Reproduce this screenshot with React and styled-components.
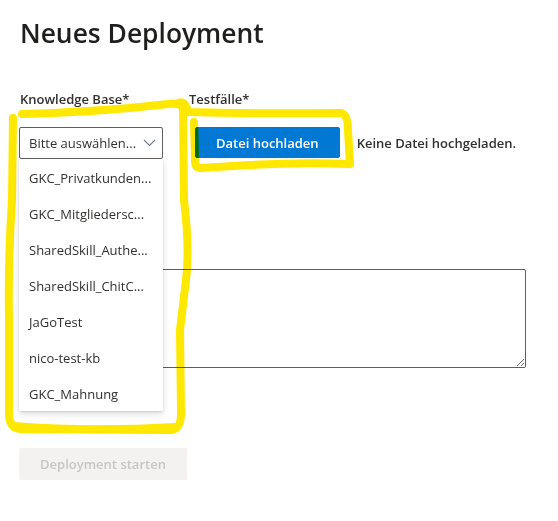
import styled, { createGlobalStyle } from "styled-components";

const GlobalStyle = createGlobalStyle`
  body {
    margin: 0;
    background: #ffffff;
    font-family: "Open Sans", "Noto Sans", sans-serif;
    color: #323130;
  }
`;

const options = [
  "GKC_Privatkunden...",
  "GKC_Mitgliedersc...",
  "SharedSkill_Authe...",
  "SharedSkill_ChitC...",
  "JaGoTest",
  "nico-test-kb",
  "GKC_Mahnung",
];

export default function App() {
  return (
    <>
      <GlobalStyle />
      <Page>
        <Title>Neues Deployment</Title>

        <FieldRow>
          <Field $width={169}>
            <Label>Knowledge Base*</Label>
            <DropdownWrap>
              <Dropdown>
                <span>Bitte auswählen...</span>
                <svg width="13" height="8" viewBox="0 0 13 8" fill="none">
                  <path d="M1 1l5.5 5.5L12 1" stroke="#6f7c8e" strokeWidth="1.1" />
                </svg>
              </Dropdown>
              <Callout>
                {options.map((o) => (
                  <Option key={o}>{o}</Option>
                ))}
              </Callout>
            </DropdownWrap>
          </Field>

          <Field>
            <Label>Testfälle*</Label>
            <UploadRow>
              <PrimaryButton type="button">Datei hochladen</PrimaryButton>
              <FileHint>Keine Datei hochgeladen.</FileHint>
            </UploadRow>
          </Field>
        </FieldRow>

        <TextArea />

        <DisabledButton type="button" disabled>
          Deployment starten
        </DisabledButton>

        <Marker width="558" height="521" viewBox="0 0 558 521">
          {/* highlight around the dropdown */}
          <path
            d="M22 114 Q100 112 168 104 Q180 102 183 108 L184 200 Q190 250 186 280 L180 330 L181 410 Q182 430 170 430 L20 429 Q8 428 9 410 L9 320 Q8 260 12 200 L13 118"
            stroke="#ffe800"
            strokeWidth="8"
            fill="none"
            strokeLinecap="round"
            strokeLinejoin="round"
          />
          <path
            d="M14 426 Q90 432 176 427"
            stroke="#ffe800"
            strokeWidth="8"
            fill="none"
            strokeLinecap="round"
          />
          {/* highlight around the upload button */}
          <path
            d="M176 104 Q185 98 188 112 Q260 114 342 113 Q348 116 348 130 L350 164 Q300 162 250 165 L200 168 Q195 168 195 160 L194 122"
            stroke="#ffe800"
            strokeWidth="8"
            fill="none"
            strokeLinecap="round"
            strokeLinejoin="round"
          />
        </Marker>
      </Page>
    </>
  );
}

const Page = styled.div`
  position: relative;
  width: 558px;
  height: 521px;
  box-sizing: border-box;
  padding: 13px 19px 0 19px;
`;

const Title = styled.h1`
  margin: 0 0 0 1px;
  font-size: 26.4px;
  font-weight: 600;
  line-height: 40px;
  color: #201f1e;
`;

const FieldRow = styled.div`
  display: flex;
  margin-top: 36px;
`;

const Field = styled.div`
  display: flex;
  flex-direction: column;
  width: ${(p) => (p.$width ? `${p.$width}px` : "auto")};
`;

const Label = styled.label`
  font-size: 13px;
  font-weight: 600;
  line-height: 20px;
  padding-left: 1px;
  color: #323130;
`;

const DropdownWrap = styled.div`
  position: relative;
  margin-top: 18px;
  width: 144px;
`;

const Dropdown = styled.div`
  box-sizing: border-box;
  height: 32px;
  border: 1px solid #605e5c;
  border-radius: 2px;
  display: flex;
  align-items: center;
  justify-content: space-between;
  padding: 0 6px 0 9px;
  font-size: 13px;
  color: #323130;
  background: #fff;
`;

const Callout = styled.div`
  position: absolute;
  top: 32px;
  left: 0;
  width: 144px;
  background: #fff;
  box-shadow: 0 3.2px 7.2px rgba(0, 0, 0, 0.13), 0 0.6px 1.8px rgba(0, 0, 0, 0.11);
  z-index: 2;
`;

const Option = styled.div`
  height: 36px;
  display: flex;
  align-items: center;
  padding: 2px 0 0 10px;
  box-sizing: border-box;
  font-size: 13px;
  color: #323130;
  white-space: nowrap;
`;

const UploadRow = styled.div`
  display: flex;
  align-items: center;
  margin-top: 18px;
  gap: 17px;
`;

const PrimaryButton = styled.button`
  height: 31px;
  margin-left: 7px;
  padding: 0 20px;
  border: 1px solid #0078d4;
  border-radius: 2px;
  background: #0078d4;
  color: #fff;
  font-family: "Open Sans", "Noto Sans", sans-serif;
  font-size: 13px;
  font-weight: 600;
`;

const FileHint = styled.span`
  font-size: 13px;
  font-weight: 600;
  color: #323130;
  white-space: nowrap;
`;

const TextArea = styled.textarea`
  display: block;
  box-sizing: border-box;
  margin-top: 110px;
  width: 507px;
  height: 99px;
  border: 1px solid #605e5c;
  border-radius: 2px;
  font-family: inherit;
`;

const DisabledButton = styled.button`
  display: block;
  margin-top: 80px;
  height: 32px;
  width: 168px;
  border: none;
  border-radius: 2px;
  background: #f3f2f1;
  color: #c8c6c4;
  font-family: "Open Sans", "Noto Sans", sans-serif;
  font-size: 13px;
  font-weight: 600;
`;

const Marker = styled.svg`
  position: absolute;
  top: 0;
  left: 0;
  pointer-events: none;
  mix-blend-mode: multiply;
  z-index: 3;
`;
